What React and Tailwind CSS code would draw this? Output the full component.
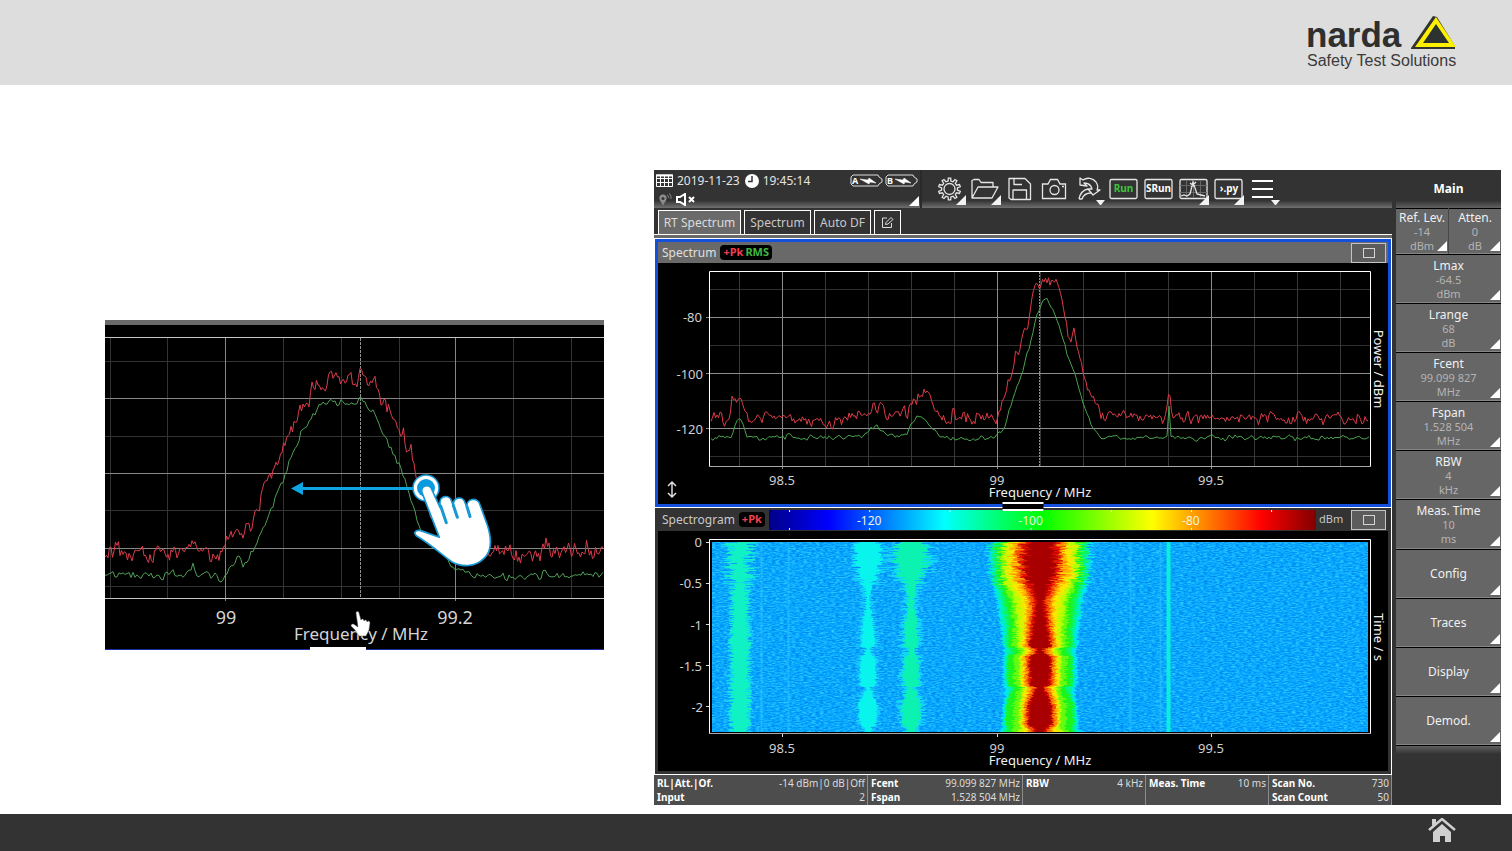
import React from 'react';

const FONT = "font-['Noto_Sans',sans-serif]";

// small seeded generator so the traces look the same on every render
const createRandom = (seed) => {
  let s = seed;
  return () => {
    s = (s * 16807) % 2147483647;
    return s / 2147483647;
  };
};

const interpolate = (points, x, col = 1) => {
  if (x <= points[0][0]) return points[0][col];
  for (let i = 1; i < points.length; i++) {
    if (x <= points[i][0]) {
      const a = points[i - 1];
      const b = points[i];
      return a[col] + ((b[col] - a[col]) * (x - a[0])) / (b[0] - a[0]);
    }
  }
  return points[points.length - 1][col];
};

const tracePath = (points, noise, seed, step = 1.5) => {
  const random = createRandom(seed);
  const start = points[0][0];
  const end = points[points.length - 1][0];
  let d = '';
  let last = 0;
  for (let x = start; x <= end; x += step) {
    last = last * 0.35 + (random() + random() - 1) * noise;
    const y = interpolate(points, x) + last;
    d += `${d ? 'L' : 'M'}${x.toFixed(1)} ${y.toFixed(1)}`;
  }
  return d;
};

const peakPoints = [
  [711, 419], [729, 419], [732, 402], [738, 398], [743, 400], [746, 407], [749, 419], [786, 419], [788, 412], [792, 420], [845, 421],
  [849, 418], [862, 411], [868, 412], [873, 404], [878, 409], [883, 405], [887, 417], [907, 414], [911, 401], [918, 396],
  [924, 393], [930, 399], [935, 409], [943, 419], [951, 419], [953, 410], [956, 419], [996, 417], [1002, 403], [1008, 378],
  [1012, 376], [1016, 347], [1019, 356], [1023, 337], [1027, 334], [1031, 302], [1035, 286], [1040, 281], [1058, 281], [1060, 290],
  [1063, 309], [1067, 328], [1071, 340], [1074, 329], [1077, 350], [1081, 360], [1084, 377], [1088, 392], [1095, 403], [1099, 405],
  [1101, 418], [1166, 418], [1168, 397], [1170, 399], [1172, 418], [1369, 418],
];

const rmsPoints = [
  [711, 438], [731, 438], [735, 424], [739, 418], [743, 424], [747, 437], [786, 438], [788, 433], [792, 438], [860, 437],
  [868, 429], [874, 426], [882, 430], [887, 437], [907, 435], [911, 423], [918, 417], [926, 420], [933, 430], [940, 438],
  [995, 437], [1004, 430], [1010, 407], [1016, 389], [1023, 370], [1030, 345], [1036, 320], [1040, 308], [1042, 302], [1046, 299],
  [1053, 309], [1057, 320], [1062, 335], [1067, 352], [1074, 370], [1079, 388], [1084, 407], [1090, 422], [1097, 434], [1103, 438],
  [1167, 438], [1168, 408], [1170, 409], [1171, 438], [1369, 438],
];

const zoomPeakPoints = [
  [0, 235], [10, 230], [20, 233], [30, 234], [48, 232], [50, 219], [52, 232], [86, 230], [88, 218], [91, 229], [110, 234],
  [118, 231], [121, 223], [128, 213], [137, 216], [143, 204], [147, 206], [152, 190], [158, 174], [162, 162],
  [168, 147], [173, 141], [180, 126], [186, 106], [192, 102], [197, 84], [204, 84], [206, 70], [218, 68], [226, 60], [250, 60],
  [256, 52], [260, 62], [269, 60], [276, 78], [284, 92], [290, 105], [295, 118], [298, 109], [301, 132], [306, 131],
  [309, 152], [315, 165], [330, 200], [345, 228], [370, 232], [395, 232], [436, 234], [441, 220], [445, 231], [478, 233],
  [481, 222], [484, 232], [499, 232],
];

const zoomRmsPoints = [
  [0, 254], [86, 255], [88, 249], [91, 256], [104, 254], [118, 258], [122, 250], [133, 238], [138, 246], [148, 230], [155, 215],
  [161, 200], [168, 186], [174, 165], [179, 158], [184, 140], [190, 128], [197, 112], [202, 109], [208, 95],
  [217, 86], [224, 83], [253, 83], [256, 78], [262, 86], [268, 90], [276, 106], [284, 124], [291, 136], [296, 150],
  [301, 160], [305, 176], [310, 192], [316, 208], [325, 214], [340, 238], [355, 249], [366, 253], [380, 257],
  [436, 255], [440, 249], [445, 256], [499, 255],
];

// half widths of the carrier per time row: [y, dark, red, orange, yellow, lime, green, mint, cyan]
const carrierRows = [
  [542, 12, 18, 23, 30, 36, 41, 46, 50],
  [570, 14, 18, 24, 31, 36, 41, 46, 50],
  [582, 9, 14, 20, 28, 34, 40, 45, 48],
  [600, 3, 6, 11, 17, 25, 33, 39, 43],
  [615, 5, 7, 12, 16, 24, 32, 37, 41],
  [630, 7, 9, 13, 16, 22, 30, 34, 38],
  [646, 10, 11, 15, 18, 22, 32, 35, 38],
  [648, 3, 4, 10, 13, 17, 26, 32, 36],
  [653, 3, 4, 10, 13, 17, 26, 32, 36],
  [656, 10, 11, 15, 18, 21, 32, 34, 37],
  [685, 9, 10, 15, 18, 20, 31, 33, 37],
  [687, 2, 3, 9, 13, 16, 24, 30, 35],
  [695, 7, 8, 13, 16, 18, 30, 32, 35],
  [706, 11, 12, 16, 18, 20, 33, 35, 38],
  [724, 11, 12, 16, 18, 20, 33, 35, 38],
  [728, 5, 8, 13, 16, 20, 30, 34, 38],
  [732, 2, 5, 11, 16, 24, 33, 37, 42],
];

const leftBand = [[542, 9], [575, 9], [585, 7], [620, 8], [640, 9], [665, 8], [700, 9], [732, 8]];
const bandB = [
  [542, 12], [552, 15], [565, 13], [580, 7], [592, 3], [606, 3], [622, 6], [646, 8], [648, 3], [654, 4], [657, 8],
  [685, 9], [687, 2], [692, 5], [704, 10], [718, 10], [725, 8], [727, 5], [732, 4],
];
const bandC = [
  [542, 15], [560, 17], [570, 14], [582, 8], [595, 4], [607, 4], [622, 7], [646, 8], [648, 3], [654, 4], [657, 8],
  [685, 9], [687, 3], [692, 6], [704, 10], [718, 10], [725, 9], [727, 5], [732, 4],
];

// one horizontal dash per time row, centred on the signal
const bandPath = (center, rows, col, jitter, seed, extra = 0) => {
  const random = createRandom(seed);
  let d = '';
  for (let y = 542; y < 732; y++) {
    const half = interpolate(rows, y, col) + extra;
    const scale = y < 585 ? 2 : 0.8;
    const l = Math.max(1, half + (random() - 0.5) * jitter * scale);
    const r = Math.max(1, half + (random() - 0.5) * jitter * scale);
    d += `M${(center - l).toFixed(1)} ${y + 0.5}h${(l + r).toFixed(1)}`;
  }
  return d;
};

const carrierColors = ['#a80000', '#e81000', '#ff8c00', '#ffe600', '#b4ff00', '#1cf51c', '#00f59a', '#00e4ff'];

// blends the listed levels so the carrier has soft steps
const carrierLayers = () => {
  const layers = [];
  for (let i = carrierColors.length - 1; i >= 0; i--) {
    if (i < carrierColors.length - 1) {
      const mid = carrierRows.map((r) => [r[0], (r[i + 1] + r[i + 2]) / 2]);
      layers.push({ d: bandPath(1040, mid, 1, 6, 5077 + i * 911), color: carrierColors[i], opacity: 0.5 });
    }
    layers.push({ d: bandPath(1040, carrierRows, i + 1, 5, 9091 + i * 733), color: carrierColors[i], opacity: 1 });
  }
  return layers;
};

const majorX = [782, 997, 1211];
const minorX = [739, 825, 868, 911, 954, 1040, 1083, 1125, 1168, 1254, 1297, 1340];

const Logo = () => (
  <svg viewBox="0 0 150 58" className="w-[150px] h-[58px]" aria-label="narda Safety Test Solutions">
    <text x="-1" y="33" fontSize="35" fontWeight="700" fill="#2f2f2f" fontFamily="Liberation Sans, sans-serif">narda</text>
    <text x="0" y="52" fontSize="16" fill="#3a3a3a" fontFamily="Liberation Sans, sans-serif">Safety Test Solutions</text>
    <path d="M126 2L104 34V35H148V32L130 3Z" fill="#33342c" />
    <path d="M129 3L149 33H108Z" fill="#fdf000" />
    <path d="M129 10L142 29H116Z" fill="#2c3230" />
  </svg>
);

const ZoomedSpectrum = () => (
  <svg viewBox="0 0 499 330" className="block w-full h-auto" role="img" aria-label="Dragging the spectrum to the left">
    <rect width="499" height="330" fill="#000" />
    <rect width="499" height="5" fill="#6a6a6a" />
    <g stroke="#333" strokeWidth="1">
      {[41, 116, 190, 266].map((y) => <path key={y} d={`M0 ${y + 0.5}H499`} />)}
      {[5, 62, 178, 236, 294, 408, 466].map((x) => <path key={x} d={`M${x + 0.5} 18V278`} />)}
    </g>
    <g stroke="#868686" strokeWidth="1">
      {[78, 153, 228].map((y) => <path key={y} d={`M0 ${y + 0.5}H499`} />)}
      {[120, 350].map((x) => <path key={x} d={`M${x + 0.5} 18V281`} />)}
    </g>
    <path d="M0 17.5H499M0 278.5H499" stroke="#c4c4c4" />
    <path d="M255.500 18V278" stroke="#909090" strokeDasharray="3 1" />
    <path d={tracePath(zoomRmsPoints, 5, 31337, 2)} fill="none" stroke="#4f9f57" />
    <path d={tracePath(zoomPeakPoints, 10, 77123)} fill="none" stroke="#dc3c4c" />
    <g fill="#d4d4d4" fontSize="18" textAnchor="middle">
      <text x="121" y="304">99</text>
      <text x="350" y="304">99.2</text>
      <text x="256" y="320" fontSize="17">Frequency / MHz</text>
    </g>
    <path d="M0 329.500H499" stroke="#1c2ea8" />
    <rect x="205" y="327" width="56" height="3" fill="#fff" />
    {/* mouse pointer */}
    <path
      d="M251 293C251 291 254 291 254 293L256 300C257 298 259 299 259 301C260 299 262 300 262 302C263 300 265 301 265 303L264 310L261 316H254L250 310L246 306C246 304 248 303 250 305L253 307Z"
      fill="#fff" stroke="#555" strokeWidth="0.5"
    />
    {/* swipe gesture */}
    <path d="M197 168.500H309" stroke="#0ea5e2" strokeWidth="3" />
    <path d="M186 168.500L198 162V175Z" fill="#0ea5e2" />
    <circle cx="321" cy="168" r="13" fill="#fff" stroke="#1698d4" strokeWidth="1.500" />
    <circle cx="321" cy="168" r="9" fill="#0a9be0" />
    <g transform="translate(295 140) scale(0.3333)">
      <path
        d="M66 98C60 74 90 70 96 90L120 142V130C118 104 150 104 155 124L160 138C158 108 190 108 195 128L201 142C198 112 234 112 240 134L262 195C276 238 274 275 252 295C225 322 185 322 155 305C120 280 95 255 50 228C38 218 48 208 62 212L118 232Z"
        fill="#fff" stroke="#1698d4" strokeWidth="5" strokeLinejoin="round"
      />
      <path d="M122 138L139 188M160 136L172 172M201 140L210 170" stroke="#1698d4" strokeWidth="9" strokeLinecap="round" />
    </g>
  </svg>
);

const Corner = () => (
  <svg viewBox="0 0 10 10" className="absolute right-px bottom-0.5 w-2.5 h-2.5" aria-hidden="true">
    <path d="M10 0V10H0Z" fill="#fff" />
  </svg>
);

const Battery = ({ name }) => (
  <svg viewBox="0 0 33 13" className="w-[33px] h-[13px]" aria-label={`Battery ${name}`}>
    <path d="M3 1H28L29 3L32 5V8L29 10L28 12H3L1 10V3Z" fill="none" stroke="#ddd" />
    <text x="2" y="10" fontSize="9" fontWeight="700" fill="#fff">{name}</text>
    <path d="M10 5L18 6L19 4L26 9L20 8L19 10Z" fill="#fff" stroke="#fff" strokeWidth="0.5" />
  </svg>
);

const StatusBlock = () => (
  <div className="relative w-[268px] shrink-0 h-full pl-0.5 bg-[linear-gradient(#333_80%,#707070)] border-r-2 border-[#2a2a2a]">
    <div className="flex items-center h-[21px] gap-1 text-xs text-[#e4e4e4]">
      <svg viewBox="0 0 17 13" className="w-[17px] h-[13px]" aria-hidden="true">
        <path d="M0.500 1H16.500V12.500H0.500ZM1 4.500H16M1 8.500H16M4.500 1V12M8.500 1V12M12.500 1V12" fill="none" stroke="#fff" />
        <path d="M0 1.500H17" stroke="#fff" strokeWidth="2" />
      </svg>
      <span>2019-11-23</span>
      <svg viewBox="0 0 14 14" className="ml-px w-3.5 h-3.5" aria-hidden="true">
        <circle cx="7" cy="7" r="7" fill="#fff" />
        <path d="M7 2V7.500H3" fill="none" stroke="#333" strokeWidth="1.500" />
      </svg>
      <span>19:45:14</span>
      <span className="flex gap-0.5 ml-auto pr-0.5">
        <Battery name="A" />
        <Battery name="B" />
      </span>
    </div>
    <div className="flex items-center gap-1 h-4 pl-0.5">
      <svg viewBox="0 0 14 13" className="w-3.5 h-[13px]" aria-hidden="true">
        <path d="M5 1.500C8 1.500 9 4 8.500 6C8 8.500 6 10 5 12.500C4 10 2 8.500 1.500 6C1 4 2 1.500 5 1.500Z" fill="#8c8c8c" />
        <circle cx="5" cy="5.500" r="1.500" fill="#333" />
        <path d="M9 2C10.500 2.500 10.500 4 10.500 5M11 0.500C13 1.500 13 4 13 6" fill="none" stroke="#8c8c8c" />
      </svg>
      <svg viewBox="0 0 20 13" className="w-5 h-[13px]" aria-hidden="true">
        <path d="M1 4H4L9 1V12L4 9H1Z" fill="none" stroke="#fff" strokeWidth="2" />
        <path d="M13 4L18 9M18 4L13 9" stroke="#fff" strokeWidth="2" />
      </svg>
    </div>
    <Corner />
  </div>
);

const gearPath = () => {
  const teeth = 10;
  let d = '';
  for (let i = 0; i < teeth; i++) {
    [[-0.28, 8], [-0.17, 11], [0.17, 11], [0.28, 8]].forEach(([offset, r]) => {
      const a = ((i + offset) / teeth) * Math.PI * 2;
      d += `${d ? 'L' : 'M'}${(17.5 + Math.sin(a) * r).toFixed(1)} ${(19 - Math.cos(a) * r).toFixed(1)}`;
    });
  }
  return `${d}Z`;
};

const corner = <path d="M34 25V35H24Z" fill="#f2f2f2" stroke="none" />;
const innerCorner = <path d="M32 25V35H22Z" fill="#f2f2f2" stroke="none" />;
const caret = <path d="M24 30H33L29 35H28Z" fill="#f2f2f2" stroke="none" />;
const frame = <rect x="3" y="9.500" width="27" height="19" rx="1.500" />;
const label = { fontSize: 10, fontWeight: 700, textAnchor: 'middle', stroke: 'none' };

const tools = [
  { name: 'Settings', icon: <><path d={gearPath()} /><circle cx="17.500" cy="19" r="5.500" />{corner}</> },
  { name: 'Open', icon: <><path d="M5 28V10.500L7 9.500H12L14 12.500H26V17M5 28L11 17H31L25 28Z" strokeLinejoin="round" />{corner}</> },
  { name: 'Save', icon: <><path d="M7 8.500H23L28.500 14V29.500H9L7 28ZM12 8.500V14.500H20M11 29V20H24.500V29" strokeLinejoin="round" /></> },
  { name: 'Screenshot', icon: <><path d="M5.500 14H11L13.500 9.500H20.500L23 14H28.500V28.500H5.500Z" /><circle cx="17.500" cy="20" r="4.500" /><path d="M25 16.500H27" /></> },
  {
    name: 'Undo',
    icon: <><path d="M8 15V8L11 10C15 7 21 8 24 12C26 15 26 18 25 20H28L21 25L16 19H20C19 15 16 13 12 13L15 16ZM7 29C8 24 11 20 16 19M7 29H10C11 26 14 23 19 23" strokeLinejoin="round" />{caret}</>,
  },
  { name: 'Run', icon: <>{frame}<text x="16.500" y="22" fill="#3dc53d" {...label}>Run</text></> },
  { name: 'Single run', icon: <>{frame}<text x="16.500" y="22" fill="#fff" {...label}>SRun</text></> },
  {
    name: 'View',
    icon: <>{frame}<path d="M9.500 10V28M16.500 10V28M23.500 10V28M3 15.500H30M3 22.500H30" stroke="#666" strokeWidth="1" /><path d="M4 26L7 25L10 26L13 24L16 12L20 24L24 25L28 26M13 13L18 17M19 12L14 17" />{innerCorner}</>,
  },
  { name: 'Python', icon: <>{frame}<text x="17" y="22" fill="#fff" {...label}>›.py</text>{innerCorner}</> },
  { name: 'Menu', icon: <><path d="M5 11H26M5 19H26M5 27H26" strokeWidth="2" stroke="#fff" />{caret}</> },
];

const Toolbar = () => (
  <div className="flex flex-1 h-full pl-2.5 bg-[linear-gradient(#333_80%,#707070)]">
    {tools.map((tool) => (
      <button key={tool.name} type="button" aria-label={tool.name} className="w-[35px] h-[38px]">
        <svg viewBox="0 0 35 38" className="w-[35px] h-[38px]" fill="none" stroke="#e6e6e6" strokeWidth="1.300">
          {tool.icon}
        </svg>
      </button>
    ))}
  </div>
);

const Tabs = () => (
  <div className="flex items-end gap-[3px] h-[27px] pl-1 border-b border-white text-xs text-[#c8c8c8]">
    <button type="button" className="w-[83px] h-6 border border-b-0 border-white bg-[#6a6a6a] text-[#dcdcdc]">RT Spectrum</button>
    <button type="button" className="w-[67px] h-6 border border-b-0 border-white">Spectrum</button>
    <button type="button" className="w-[57px] h-6 border border-b-0 border-white">Auto DF</button>
    <button type="button" aria-label="Edit tabs" className="flex items-center justify-center w-[27px] h-6 border border-b-0 border-white">
      <svg viewBox="0 0 13 13" className="w-[13px] h-[13px]" fill="none" stroke="#ddd">
        <path d="M6 2H1.500V11.500H10.500V7M4.500 8.500L5 6.500L10 1.500L12 3.500L7 8Z" />
      </svg>
    </button>
  </div>
);

const MaximizeButton = () => (
  <button type="button" aria-label="Maximize" className="flex items-center justify-center w-[35px] h-5 border border-[#c4c4c4] bg-[#5c5c5c]">
    <span className="w-3 h-2.5 border border-[#d4d4d4]" />
  </button>
);

const axisLabels = (y) => (
  <>
    <text x="782" y={y}>98.5</text>
    <text x="997" y={y}>99</text>
    <text x="1211" y={y}>99.5</text>
    <text x="1040" y={y + 12} fill="#f0f0f0">Frequency / MHz</text>
  </>
);

const SpectrumPanel = () => (
  <section className="relative border-x border-white">
    <div className="border-[3px] border-[#1450dc] bg-black">
      <div className="flex items-center h-[21px] pl-1 pr-0.5 gap-1 bg-[#696969]">
        <h2 className="text-xs text-[#e0e0e0]">Spectrum</h2>
        <span className="flex gap-0.5 px-[3px] h-[15px] items-center rounded bg-black text-[11px] font-bold">
          <span className="text-[#f04050]">+Pk</span>
          <span className="text-[#3fb83f]">RMS</span>
        </span>
        <span className="ml-auto"><MaximizeButton /></span>
      </div>
      <svg viewBox="658 263 730 241" className="block w-full h-auto" role="img" aria-label="Spectrum chart">
        <g stroke="#303030">
          {[289, 345, 400, 456].map((y) => <path key={y} d={`M710 ${y + 0.5}H1370`} />)}
          {minorX.map((x) => <path key={x} d={`M${x + 0.5} 272V466`} stroke="#383838" />)}
        </g>
        <g stroke="#8c8c8c">
          {[317, 373, 428].map((y) => <path key={y} d={`M706 ${y + 0.5}H1370`} />)}
          {majorX.map((x) => <path key={x} d={`M${x + 0.5} 272V469`} />)}
        </g>
        <path d="M709.500 466.500V271.500H1370.500V466.500" fill="none" stroke="#fff" />
        <path d="M709 466.500H1371" stroke="#a8a8a8" />
        <path d="M1039.500 272V466" stroke="#909090" strokeDasharray="2 1" />
        <path d={tracePath(rmsPoints, 3.5, 41234, 2)} fill="none" stroke="#48a34c" />
        <path d={tracePath(peakPoints, 7, 90017)} fill="none" stroke="#dc3c48" />
        <g fill="#cfcfcf" fontSize="13" textAnchor="end">
          <text x="702" y="322">-80</text>
          <text x="703" y="379">-100</text>
          <text x="703" y="434">-120</text>
        </g>
        <g fill="#cfcfcf" fontSize="13" textAnchor="middle">
          {axisLabels(485)}
          <text transform="translate(1374 369) rotate(90)" fill="#f0f0f0">Power / dBm</text>
        </g>
        <path d="M672 482V497M668 486L672 482L676 486M668 493L672 497L676 493" fill="none" stroke="#ddd" strokeWidth="1.500" />
      </svg>
    </div>
    <div className="absolute left-1/2 -bottom-1 z-10 w-[41px] h-[9px] -translate-x-1/2 border-y-2 border-white bg-black" />
  </section>
);

const ColorBar = () => (
  <svg viewBox="0 0 546 20" preserveAspectRatio="none" className="flex-1 min-w-0 h-5" aria-label="Level scale">
    <defs>
      <linearGradient id="levels">
        <stop offset="0" stopColor="#000088" />
        <stop offset="0.110" stopColor="#0000ff" />
        <stop offset="0.320" stopColor="#00ffff" />
        <stop offset="0.500" stopColor="#00ff00" />
        <stop offset="0.700" stopColor="#ffff00" />
        <stop offset="0.900" stopColor="#ff0000" />
        <stop offset="1" stopColor="#800000" />
      </linearGradient>
    </defs>
    <rect width="546" height="20" fill="url(#levels)" />
    <path d="M20.500 0V2M20.500 18V20M100.500 0V2M100.500 18V20M180.500 0V2M261.500 0V2M261.500 18V20M341.500 0V2M421.500 0V2M421.500 18V20M501.500 0V2" stroke="#fff" />
    <g fill="#f4f4e0" fontSize="12" textAnchor="middle">
      <text x="100" y="15">-120</text>
      <text x="261" y="15">-100</text>
      <text x="421" y="15">-80</text>
    </g>
  </svg>
);

const SpectrogramPanel = () => (
  <section className="border-x border-t border-white">
    <div className="border-x-[3px] border-b-[3px] border-[#333] bg-black">
      <div className="flex items-center h-[23px] pl-1 pr-0.5 bg-[#333]">
        <h2 className="text-xs text-[#c8c8c8]">Spectrogram</h2>
        <span className="flex items-center h-[15px] mx-1 px-[3px] rounded bg-black text-[11px] font-bold text-[#f04050]">+Pk</span>
        <ColorBar />
        <span className="w-[35px] pl-[3px] text-[11px] text-[#c8c8c8]">dBm</span>
        <MaximizeButton />
      </div>
      <svg viewBox="658 531 730 240" className="block w-full h-auto" role="img" aria-label="Spectrogram chart">
        <defs>
          <filter id="floor" x="0" y="0" width="100%" height="100%" colorInterpolationFilters="sRGB">
            <feTurbulence type="fractalNoise" baseFrequency="0.25 0.8" numOctaves="2" seed="4" />
            <feColorMatrix values="0.450 0 0 0 -0.190  0.450 0 0 0 0.430  0.200 0 0 0 0.900  0 0 0 0 1" />
          </filter>
          <clipPath id="plot"><rect x="712" y="542" width="656" height="190" /></clipPath>
        </defs>
        <rect x="712" y="542" width="656" height="190" filter="url(#floor)" />
        <g clipPath="url(#plot)" fill="none">
          <path d="M761.500 542V732M788.500 542V732M1130.500 542V732M1160.500 542V732" stroke="#30c8ff" strokeWidth="2" opacity="0.500" />
          <path d={bandPath(740, leftBand, 1, 11, 11213, 1)} stroke="#10d4f0" />
          <path d={bandPath(740, leftBand, 1, 8, 12771)} stroke="#10f2c4" />
          <path d={bandPath(868, bandB, 1, 10, 13999, 1)} stroke="#10d0fa" />
          <path d={bandPath(868, bandB, 1, 4, 14111, -1)} stroke="#08f4ec" />
          <path d={bandPath(911, bandC, 1, 10, 15777, 2)} stroke="#10d8f4" />
          <path d={bandPath(911, bandC, 1, 5, 16333, -1)} stroke="#0cf2b0" />
          {carrierLayers().map((layer, i) => (
            <path key={i} d={layer.d} stroke={layer.color} opacity={layer.opacity} />
          ))}
          <path d="M1168.500 542V732" stroke="#08f0dc" strokeWidth="4" />
        </g>
        <path d="M709.500 733.500V539.500H1370.500V733.500" fill="none" stroke="#fff" />
        <path d="M709 733.500H1371" stroke="#a8a8a8" />
        <path d="M706 542.500H709M706 583.500H709M706 624.500H709M706 665.500H709M706 706.500H709M782.500 734V737M997.500 734V737M1211.500 734V737" stroke="#ddd" />
        <g fill="#cfcfcf" fontSize="13" textAnchor="end">
          <text x="702" y="547">0</text>
          <text x="702" y="588">-0.5</text>
          <text x="702" y="630">-1</text>
          <text x="702" y="671">-1.5</text>
          <text x="703" y="712">-2</text>
        </g>
        <g fill="#cfcfcf" fontSize="13" textAnchor="middle">
          {axisLabels(753)}
          <text transform="translate(1374 637) rotate(90)" fill="#f0f0f0">Time / s</text>
        </g>
      </svg>
    </div>
  </section>
);

const readings = [
  [['RL|Att.|Of.', '-14 dBm|0 dB|Off'], ['Input', '2']],
  [['Fcent', '99.099 827 MHz'], ['Fspan', '1.528 504 MHz']],
  [['RBW', '4 kHz']],
  [['Meas. Time', '10 ms']],
  [['Scan No.', '730'], ['Scan Count', '50']],
];

const Readings = () => (
  <div className="grid grid-cols-[214fr_155fr_123fr_123fr_123fr] h-[31px] border-t border-white bg-[#4d4d4d] text-[10px] leading-[14px] text-[#dcdcdc]">
    {readings.map((group) => (
      <dl key={group[0][0]} className="pt-px pl-[3px] pr-0.5 border-r border-[#8c8c8c]">
        {group.map(([name, value]) => (
          <div key={name} className="flex justify-between whitespace-nowrap">
            <dt className="font-bold text-white">{name}</dt>
            <dd>{value}</dd>
          </div>
        ))}
      </dl>
    ))}
  </div>
);

const MenuButton = ({ name, value, unit }) => (
  <button
    type="button"
    className="relative flex flex-col flex-1 items-center justify-center min-h-0 pt-0.5 border-t border-t-black border-b border-b-[#858585] bg-[#666] text-xs leading-[14px] text-[#f0f0f0]"
  >
    <span>{name}</span>
    {value && <span className="text-[11px] leading-[14px] text-[#b4b4b4]">{value}</span>}
    {unit && <span className="text-[11px] leading-[14px] text-[#b4b4b4]">{unit}</span>}
    <Corner />
  </button>
);

const Sidebar = () => (
  <nav className="flex flex-col w-[105px] shrink-0">
    <h2 className="flex items-center justify-center h-[38px] text-xs font-bold text-white bg-[linear-gradient(#333_80%,#606060)]">Main</h2>
    <div className="flex flex-1">
      <MenuButton name="Ref. Lev." value="-14" unit="dBm" />
      <span className="w-px bg-[#484848]" />
      <MenuButton name="Atten." value="0" unit="dB" />
    </div>
    <MenuButton name="Lmax" value="-64.5" unit="dBm" />
    <MenuButton name="Lrange" value="68" unit="dB" />
    <MenuButton name="Fcent" value="99.099 827" unit="MHz" />
    <MenuButton name="Fspan" value="1.528 504" unit="MHz" />
    <MenuButton name="RBW" value="4" unit="kHz" />
    <MenuButton name="Meas. Time" value="10" unit="ms" />
    <MenuButton name="Config" />
    <MenuButton name="Traces" />
    <MenuButton name="Display" />
    <MenuButton name="Demod." />
    <div className="h-[60px] border-t border-black bg-[linear-gradient(#606060,#333_8px)]" />
  </nav>
);

const Analyzer = () => (
  <div className="flex gap-1 bg-[#333]">
    <div className="flex-1 min-w-0">
      <div className="flex h-[38px]">
        <StatusBlock />
        <Toolbar />
      </div>
      <Tabs />
      <div className="h-1 bg-[#6a6a6a] border-b border-white" />
      <SpectrumPanel />
      <SpectrogramPanel />
      <Readings />
    </div>
    <Sidebar />
  </div>
);

const App = () => {
  return (
    <div className={`flex flex-col min-h-screen bg-white ${FONT}`}>
      <header className="flex items-start justify-end h-[85px] pt-3.5 pr-[55px] bg-[#dddddd]">
        <Logo />
      </header>
      <main className="grid flex-1 items-start grid-cols-[minmax(0,499fr)_minmax(0,847fr)] gap-[50px] pt-[85px] pl-[105px] pr-[11px] pb-[9px]">
        <div className="mt-[150px]">
          <ZoomedSpectrum />
        </div>
        <Analyzer />
      </main>
      <footer className="flex items-start justify-end h-[37px] pt-1 pr-14 bg-[#333]">
        <a href="#home" aria-label="Home">
          <svg viewBox="0 0 28 26" className="w-7 h-[26px]">
            <path d="M5 14L14 6L23 14V24H17V18H12V24H5Z" fill="#d0d0d0" />
            <path d="M1 12L14 1L27 12" fill="none" stroke="#d0d0d0" strokeWidth="2.500" />
            <path d="M4 1H8V5L4 8Z" fill="#d0d0d0" />
          </svg>
        </a>
      </footer>
    </div>
  );
};

export default App;
